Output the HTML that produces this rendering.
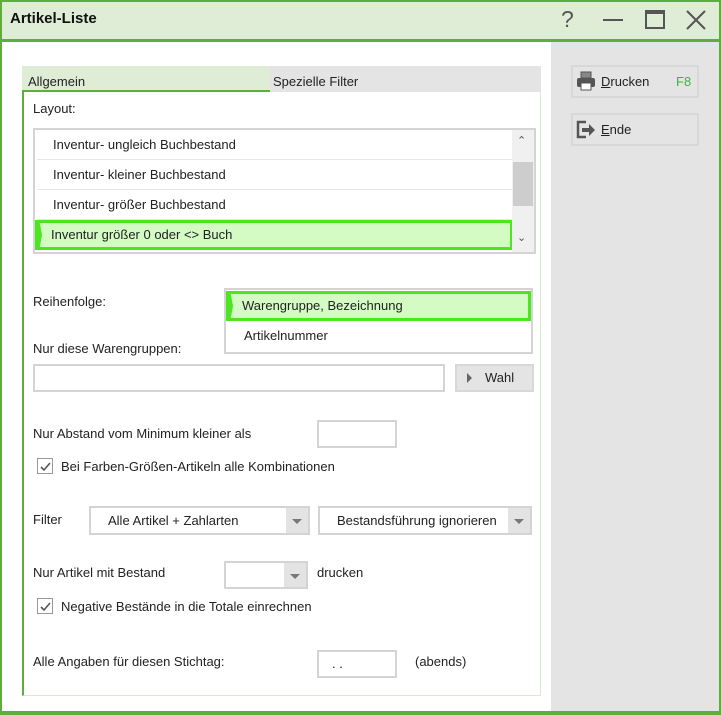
<!DOCTYPE html>
<html><head><meta charset="utf-8"><style>
*{box-sizing:border-box;margin:0;padding:0}
body{width:721px;height:715px;position:relative;overflow:hidden;background:#fff;font-family:"Liberation Sans",sans-serif;font-size:13px;color:#222}
.a{position:absolute}
.t{position:absolute;white-space:nowrap;line-height:16px}
.box{position:absolute;border:2px solid #d4d4d4;background:#fff}
.row{position:absolute;left:2px;height:30px;line-height:29px;padding-left:16px;border-bottom:1px solid #e6e6e6;white-space:nowrap}
.sel{background:#d4fbc4;border:3px solid #4be61e;line-height:24px;padding-left:13px}
.sel:before{content:"";position:absolute;left:-3px;top:-3px;width:7px;height:30px;background:#4be61e;clip-path:polygon(0 0,60% 0,100% 50%,60% 100%,0 100%)}
.dd{position:absolute;top:0;right:0;width:22px;height:100%;background:#e3e3e3}
.dd:after{content:"";position:absolute;left:6px;top:11px;border-left:5px solid transparent;border-right:5px solid transparent;border-top:5px solid #777}
.cb{position:absolute;width:16px;height:16px;border:1px solid #999;background:#fff}
.btn{position:absolute;border:2px solid #d8d8d8;background:#e4e4e4}
</style></head><body>
<div class="a" style="left:0;top:0;width:721px;height:715px;border:2px solid #5fae3c"></div>
<div class="a" style="left:2px;top:2px;width:717px;height:37px;background:#dfedd6"></div>
<div class="a" style="left:0;top:39px;width:721px;height:3px;background:#5fae3c"></div>
<div class="t" style="left:10px;top:11px;font-size:15px;font-weight:bold;color:#111">Artikel-Liste</div>
<div class="t" style="left:561px;top:8px;font-size:23px;color:#555;line-height:23px">?</div>
<div class="a" style="left:603px;top:19px;width:20px;height:2px;background:#555"></div>
<div class="a" style="left:645px;top:10px;width:20px;height:19px;border:2px solid #555;border-top-width:4px"></div>
<svg class="a" style="left:686px;top:10px" width="20" height="20"><path d="M1 1L19 19M19 1L1 19" stroke="#555" stroke-width="2"/></svg>
<div class="a" style="left:551px;top:42px;width:168px;height:670px;background:#e4e4e4"></div>
<div class="a" style="left:0;top:711px;width:721px;height:4px;background:#5fae3c"></div>
<div class="btn" style="left:571px;top:65px;width:128px;height:33px"></div>
<svg class="a" style="left:576px;top:71px" width="20" height="20"><rect x="5" y="1" width="10" height="6" fill="#888" stroke="#555"/><rect x="1" y="7" width="18" height="9" rx="2" fill="#555"/><rect x="5" y="12" width="10" height="7" fill="#fff" stroke="#555"/></svg>
<div class="t" style="left:601px;top:74px"><u>D</u>rucken</div>
<div class="t" style="left:676px;top:74px;color:#3cb43c">F8</div>
<div class="btn" style="left:571px;top:113px;width:128px;height:33px"></div>
<svg class="a" style="left:576px;top:120px" width="20" height="20"><path d="M10 2H2V17H10" fill="none" stroke="#555" stroke-width="2.5"/><path d="M6 8H13V4L19 10L13 16V12H6Z" fill="#555"/></svg>
<div class="t" style="left:601px;top:122px"><u>E</u>nde</div>
<div class="a" style="left:22px;top:66px;width:519px;height:26px;background:#e4e4e4"></div>
<div class="a" style="left:22px;top:66px;width:248px;height:26px;background:#dfedd6;border-bottom:2px solid #5fae3c"></div>
<div class="t" style="left:28px;top:74px">Allgemein</div>
<div class="t" style="left:273px;top:74px">Spezielle Filter</div>
<div class="a" style="left:22px;top:92px;width:519px;height:604px;border:1px solid #d8ebcd;border-left:2px solid #5fae3c;border-top:none"></div>
<div class="t" style="left:33px;top:101px">Layout:</div>
<div class="box" style="left:33px;top:128px;width:503px;height:126px">
<div class="row" style="top:0;width:476px">Inventur- ungleich Buchbestand</div>
<div class="row" style="top:30px;width:476px">Inventur- kleiner Buchbestand</div>
<div class="row" style="top:60px;width:476px">Inventur- größer Buchbestand</div>
<div class="row sel" style="top:90px;left:0;width:478px;height:30px">Inventur größer 0 oder &lt;&gt; Buch</div>
<div class="a" style="left:477px;top:0;width:22px;height:122px;background:#f0f0f0"></div>
<div class="a" style="left:478px;top:32px;width:20px;height:44px;background:#cdcdcd"></div>
<div class="t" style="left:482px;top:3px;font-size:11px;color:#555">&#8963;</div>
<div class="t" style="left:482px;top:100px;font-size:11px;color:#555">&#8964;</div>
</div>
<div class="t" style="left:33px;top:294px">Reihenfolge:</div>
<div class="box" style="left:224px;top:288px;width:309px;height:66px">
<div class="row sel" style="top:1px;left:0;width:305px;height:30px">Warengruppe, Bezeichnung</div>
<div class="row" style="top:31px;width:300px;border:none">Artikelnummer</div>
</div>
<div class="t" style="left:33px;top:341px">Nur diese Warengruppen:</div>
<div class="box" style="left:33px;top:364px;width:412px;height:28px"></div>
<div class="btn" style="left:455px;top:364px;width:79px;height:28px"></div>
<div class="a" style="left:467px;top:373px;border-top:5px solid transparent;border-bottom:5px solid transparent;border-left:5px solid #666"></div>
<div class="t" style="left:485px;top:370px">Wahl</div>
<div class="t" style="left:33px;top:426px">Nur Abstand vom Minimum kleiner als</div>
<div class="box" style="left:317px;top:420px;width:80px;height:28px"></div>
<div class="cb" style="left:37px;top:458px"></div>
<svg class="a" style="left:39px;top:460px" width="13" height="13"><path d="M2 7L5 10L11 3" fill="none" stroke="#555" stroke-width="1.6"/></svg>
<div class="t" style="left:61px;top:459px">Bei Farben-Größen-Artikeln alle Kombinationen</div>
<div class="t" style="left:33px;top:512px">Filter</div>
<div class="box" style="left:89px;top:506px;width:221px;height:29px"><div class="t" style="left:17px;top:5px">Alle Artikel + Zahlarten</div><div class="dd"></div></div>
<div class="box" style="left:318px;top:506px;width:214px;height:29px;overflow:hidden"><div class="t" style="left:17px;top:5px;width:164px;overflow:hidden">Bestandsführung ignorieren</div><div class="dd" style="border-left:3px solid #fff;width:25px"></div></div>
<div class="t" style="left:33px;top:565px">Nur Artikel mit Bestand</div>
<div class="box" style="left:224px;top:561px;width:84px;height:28px"><div class="dd"></div></div>
<div class="t" style="left:317px;top:565px">drucken</div>
<div class="cb" style="left:37px;top:598px"></div>
<svg class="a" style="left:39px;top:600px" width="13" height="13"><path d="M2 7L5 10L11 3" fill="none" stroke="#555" stroke-width="1.6"/></svg>
<div class="t" style="left:61px;top:599px">Negative Bestände in die Totale einrechnen</div>
<div class="t" style="left:33px;top:654px">Alle Angaben für diesen Stichtag:</div>
<div class="box" style="left:317px;top:650px;width:80px;height:28px"><div class="t" style="left:13px;top:4px">. .</div></div>
<div class="t" style="left:415px;top:654px">(abends)</div>
</body></html>
